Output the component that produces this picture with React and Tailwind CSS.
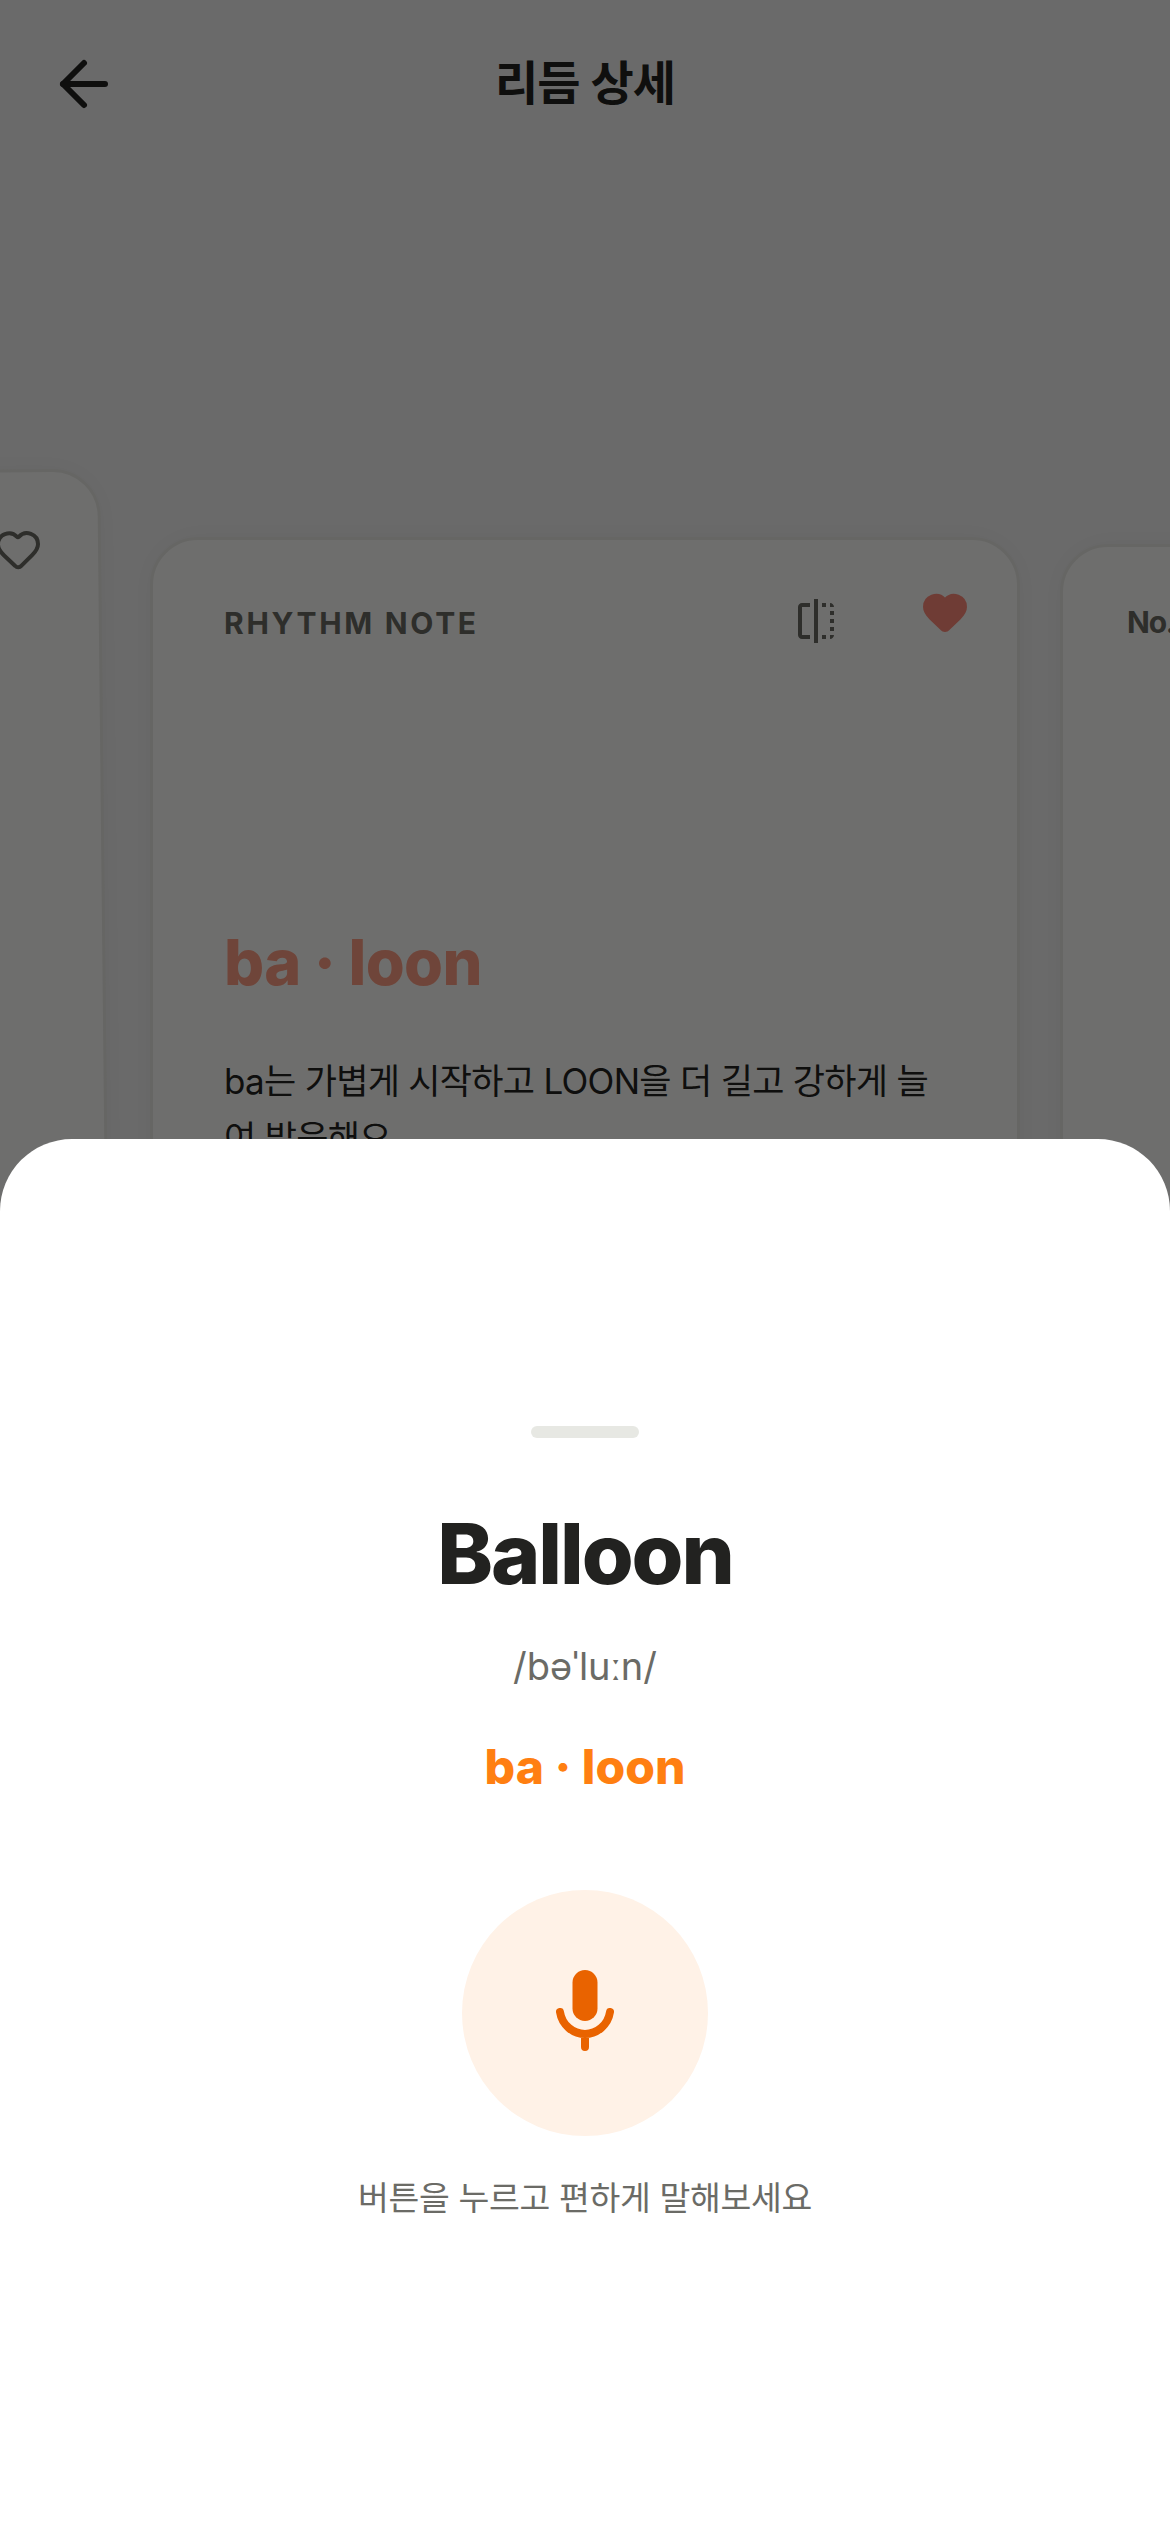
import { ArrowLeft, Heart } from "lucide-react";

function FlipIcon() {
  return (
    <svg viewBox="0 0 24 24" className="w-12 h-12 fill-current text-[#66665f]">
      <path d="M15 21h2v-2h-2v2zm4-12h2V7h-2v2zM3 5v14c0 1.1.9 2 2 2h4v-2H5V5h4V3H5c-1.1 0-2 .9-2 2zm16-2v2h2c0-1.1-.9-2-2-2zm-8 20h2V1h-2v22zm8-6h2v-2h-2v2zM15 5h2V3h-2v2zm4 8h2v-2h-2v2zm0 8c1.1 0 2-.9 2-2h-2v2z" />
    </svg>
  );
}

function MicIcon() {
  return (
    <svg viewBox="0 0 96 96" className="w-24 h-24 text-[#e96300]" fill="none">
      <rect x="35.5" y="5" width="25" height="51" rx="12.5" fill="currentColor" />
      <path d="M23 47c2 13 13 22 25 22s23-9 25-22M48 69v13" stroke="currentColor" strokeWidth="8" strokeLinecap="round" />
    </svg>
  );
}

export default function App() {
  return (
    <div className="relative w-full h-[2532px] overflow-hidden bg-[#ebebeb] font-[Inter,'Noto_Sans_CJK_KR',sans-serif]">
      {/* Header */}
      <div className="relative flex items-center justify-center h-[72px] mt-12">
        <ArrowLeft size={72} strokeWidth={2} className="absolute left-12 top-0 text-[#222220]" />
        <h1 className="text-[47px] leading-[72px] -mt-[2px] font-semibold tracking-[-0.02em] text-[#222220]">리듬 상세</h1>
      </div>

      {/* Cards */}
      <div className="flex items-start ml-[-772px] mt-[417px]">
        <div className="shrink-0 w-[878px] h-[1100px] -mt-16 rotate-[-0.6deg] rounded-[48px] border-[3px] border-[#e2e2de] bg-[#f4f4f2] shadow-[0_0_30px_rgba(0,0,0,0.04)] flex justify-end pt-[53px] pr-[56px]">
          <Heart size={48} strokeWidth={2} className="text-[#66665f]" />
        </div>

        <div className="shrink-0 w-[870px] h-[1100px] ml-[44px] rounded-[48px] border-[3px] border-[#e2e2de] bg-[#f4f4f2] shadow-[0_0_30px_rgba(0,0,0,0.04)] pl-[71px] pr-[50px]">
          <div className="flex items-center justify-between h-[48px] mt-[50px]">
            <span className="text-[30px] font-bold tracking-[0.09em] text-[#66665f] mt-[19px]">RHYTHM NOTE</span>
            <div className="flex items-start gap-[81px] mr-[-2px]">
              <div className="mt-[13px]"><FlipIcon /></div>
              <Heart size={48} strokeWidth={2} className="mt-[4px] fill-[#f58675] text-[#f58675]" />
            </div>
          </div>
          <p className="mt-[286px] text-[63px] leading-[76px] font-extrabold tracking-[-0.01em] text-[#f79a80]">ba · loon</p>
          <p className="mt-[53px] w-[722px] text-[35px] leading-[57px] tracking-[-0.02em] text-[#222220]">
            ba는 가볍게 시작하고 LOON을 더 길고 강하게 늘여 발음해요.
          </p>
        </div>

        <div className="shrink-0 w-[870px] h-[1100px] ml-10 mt-[7px] rounded-[48px] border-[3px] border-[#e2e2de] bg-[#f4f4f2] shadow-[0_0_30px_rgba(0,0,0,0.04)] pl-[64px] pt-[53px]">
          <span className="text-[30px] font-bold tracking-[-0.04em] text-[#66665f]">No.2</span>
        </div>
      </div>

      {/* Dim layer */}
      <div className="absolute inset-0 bg-black/55" />

      {/* Bottom sheet */}
      <div className="absolute left-0 right-0 top-[1139px] bottom-0 bg-white rounded-t-[72px] flex flex-col items-center">
        <div className="w-[108px] h-3 mt-[287px] rounded-full bg-[#e7e8e3]" />
        <h2 className="mt-[66px] text-[84px] leading-[100px] font-extrabold tracking-[-0.025em] text-[#222220]">Balloon</h2>
        <p className="mt-[35px] text-[38px] leading-[54px] text-[#6b6b66]">/bəˈluːn/</p>
        <p className="mt-[38px] text-[48px] leading-[72px] font-extrabold text-[#ff7f11]">ba · loon</p>
        <button className="mt-[87px] w-[246px] h-[246px] rounded-full bg-[#fff2e7] flex items-center justify-center">
          <MicIcon />
        </button>
        <p className="mt-[37px] text-[33.5px] leading-[50px] tracking-[-0.01em] text-[#6b6b66]">버튼을 누르고 편하게 말해보세요</p>
      </div>
    </div>
  );
}
